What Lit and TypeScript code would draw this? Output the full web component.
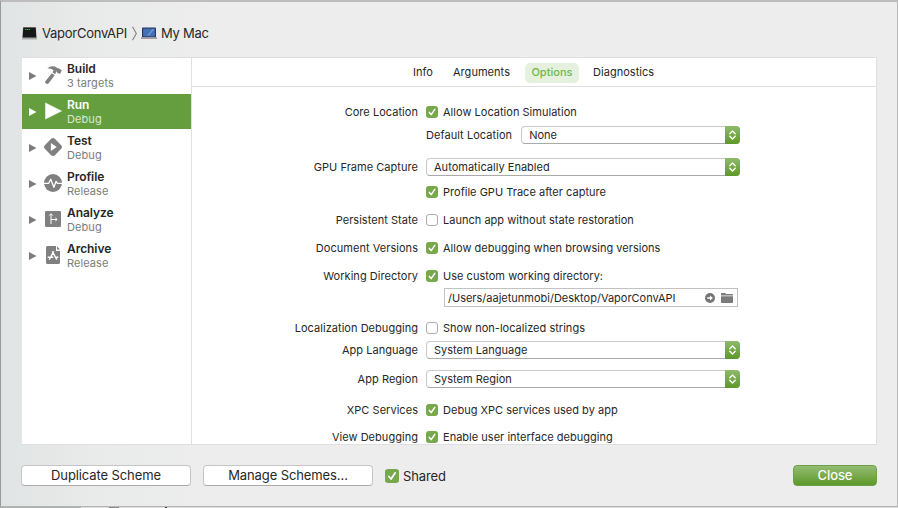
import { LitElement, html, css, svg, nothing } from "lit";
import { customElement } from "lit/decorators.js";
import { classMap } from "lit/directives/class-map.js";

const actions = [
  { name: "Build", sub: "3 targets", icon: "hammer" },
  { name: "Run", sub: "Debug", icon: "play", on: true },
  { name: "Test", sub: "Debug", icon: "test" },
  { name: "Profile", sub: "Release", icon: "profile" },
  { name: "Analyze", sub: "Debug", icon: "analyze" },
  { name: "Archive", sub: "Release", icon: "archive" },
];

const icons: Record<string, unknown> = {
  hammer: svg`<path d="M7.800 7.300 10.700 9.200 4.700 17.200Q3.500 18.600 2 17.600T1.400 15.200z" fill="#808080"/><path d="M3.300 2.200Q7 -.6 11 .6L13.800 2.300 14.800 2.200 17.800 4.200 16 8 12.900 6.600 12.900 5.600 12.300 5.500 11.200 8.200 8.600 6.500 9.600 4.300Q7.500 2.300 3.300 2.200z" fill="#808080"/>`,
  play: svg`<path d="M1.500.9v16.200L17.500 9z" fill="#fff" stroke="#fff" stroke-width=".5" stroke-linejoin="round"/>`,
  test: svg`<rect x="1.900" y="1.900" width="14.200" height="14.200" rx="3" transform="rotate(45 9 9)" fill="#808080"/><path d="M6.900 5.100v7.800L12.700 9z" fill="#fff"/>`,
  profile: svg`<circle cx="9" cy="9" r="9" fill="#808080"/><path d="M0 9.300h4.700l2-4 3.200 8 2.200-6 1.200 2H18" fill="none" stroke="#fff" stroke-width="1.300" stroke-linejoin="round"/>`,
  analyze: svg`<rect x="1" y="1" width="16" height="16" rx="1.200" fill="#808080"/><path d="M7 14V4M5.400 5.500 7 3.700l1.600 1.800M7 9.500h6M11.300 7.900l1.800 1.600-1.800 1.600" fill="none" stroke="#fff" stroke-width="1"/>`,
  archive: svg`<path d="M3.300 0h8.700v5H16V16.500a1.500 1.500 0 0 1-1.500 1.500h-11A1.500 1.500 0 0 1 2 16.500V1.400A1.400 1.400 0 0 1 3.300 0z" fill="#808080"/><path d="M13 .3 16 3.600h-3z" fill="#808080"/><path d="M9.700 5.300 5.300 13.700M8.300 5.300l4.500 8.400M3.700 11.300h5.600M11.700 11.300h2.600" fill="none" stroke="#fff" stroke-width="1.400"/>`,
};

type Row = { gap: number; label?: string; kind: "check" | "select" | "path"; text: string; on?: boolean; lead?: string };
const rows: Row[] = [
  { gap: 0, label: "Core Location", kind: "check", text: "Allow Location Simulation", on: true },
  { gap: 5, kind: "select", text: "None", lead: "Default Location" },
  { gap: 14, label: "GPU Frame Capture", kind: "select", text: "Automatically Enabled" },
  { gap: 7, kind: "check", text: "Profile GPU Trace after capture", on: true },
  { gap: 10, label: "Persistent State", kind: "check", text: "Launch app without state restoration" },
  { gap: 10, label: "Document Versions", kind: "check", text: "Allow debugging when browsing versions", on: true },
  { gap: 10, label: "Working Directory", kind: "check", text: "Use custom working directory:", on: true },
  { gap: 3, kind: "path", text: "/Users/aajetunmobi/Desktop/VaporConvAPI" },
  { gap: 13, label: "Localization Debugging", kind: "check", text: "Show non-localized strings" },
  { gap: 4, label: "App Language", kind: "select", text: "System Language" },
  { gap: 11, label: "App Region", kind: "select", text: "System Region" },
  { gap: 13, label: "XPC Services", kind: "check", text: "Debug XPC services used by app", on: true },
  { gap: 9, label: "View Debugging", kind: "check", text: "Enable user interface debugging", on: true },
];

@customElement("app-root")
export class AppRoot extends LitElement {
  static styles = css`
    :host { display: block; width: 898px; height: 508px; overflow: hidden; background: linear-gradient(90deg, #a7b0ad 0 81px, #dcdcdc 81px 109px, #8c8c8c 109px 119px, #dcdcdc 119px 165px, #444 165px 167px, #dcdcdc 167px); font-family: Inter, sans-serif; color: #272727; }
    * { box-sizing: border-box; }
    svg { display: block; flex: none; }
    .sheet { width: 898px; height: 507px; border: 1px solid #b5b5b5; border-top: 2px solid #bdbdbd; border-left-color: #989b9c; background: linear-gradient(90deg, #e1e4e4 0, #e9eaea 90px, #ededed 220px, #ededed); padding: 21px 20px 0 21px; display: flex; flex-direction: column; }
    .crumb { display: flex; align-items: center; height: 20px; font-size: 13px; letter-spacing: -.27px; }
    .crumb .sep { margin: 0 3px 0 4px; }
    .crumb .t1 { margin-left: 5px; }
    .crumb .t2 { margin-left: 4px; }
    .panel { display: flex; height: 388px; margin-top: 14px; width: 855px; background: #fff; border: 1px solid #dfdfdf; border-left: 0; }
    .side { width: 170px; border-right: 1px solid #dfdfdf; }
    .item { height: 36px; display: flex; align-items: center; padding-left: 7px; border-bottom: 1px solid #fff; }
    .item .arrow { margin: 1px 7px 0 0; }
    .item .pic { width: 18px; height: 18px; margin: -1px 5px 0 0; overflow: visible; }
    .item.on { background: #659e3f; color: #fff; }
    .name { font-size: 12px; font-weight: 600; line-height: 15px; letter-spacing: -.05px; }
    .sub { font-size: 11px; line-height: 14px; letter-spacing: .08px; color: #7c7c7c; }
    .on .sub { color: #d9ead0; }
    .main { flex: 1; display: flex; flex-direction: column; overflow: hidden; }
    .tabs { height: 29px; flex: none; border-bottom: 1px solid #dfdfdf; display: flex; align-items: center; padding-left: 221px; font-size: 11px; letter-spacing: .04px; }
    .tab { margin-right: 20px; }
    .tab.on { background: #e5f1de; color: #6fb848; font-weight: 500; border-radius: 5px; width: 54px; text-align: center; height: 20px; line-height: 19px; margin: 1px 14px 0 -5px; }
    .form { padding-top: 16px; font-size: 11px; letter-spacing: .02px; }
    .row { display: flex; align-items: center; height: 18px; }
    .label { width: 226px; text-align: right; margin-right: 8px; letter-spacing: .04px; }
    .box { width: 12px; height: 12px; border: 1px solid #adadad; border-radius: 3px; background: #fff; margin-right: 5px; }
    .box.on { border: 0; background: #77a84b; }
    .lead { margin-right: 9px; letter-spacing: .06px; }
    .select { flex: 1; height: 18px; border: 1px solid #c9c9c9; border-bottom-color: #aaa; border-radius: 4px; padding-left: 7px; display: flex; align-items: center; justify-content: space-between; }
    .knob { width: 15px; height: 18px; margin: 0 -1px 0 0; border-radius: 0 4px 4px 0; background: linear-gradient(#8fba6b, #5d9829); display: grid; place-items: center; }
    .field { width: 314px; display: flex; align-items: center; }
    .path { width: 294px; height: 19px; margin: 1px 0 0 18px; border: 1px solid #c2c2c2; display: flex; align-items: center; padding: 0 4px 0 3px; }
    .path .txt { flex: 1; letter-spacing: 0; }
    .path .go { margin-right: 6px; }
    .foot { display: flex; align-items: center; height: 22px; margin: 19px 0 0 -1px; font-size: 13px; }
    .btn { width: 170px; height: 21px; border: 1px solid #c6c6c6; border-bottom-color: #ababab; border-radius: 4px; background: #fff; text-align: center; line-height: 19px; margin-right: 12px; letter-spacing: -.1px; }
    .foot .box { width: 14px; height: 14px; margin: 2px 4px 0 0; }
    .shared { margin-top: 2px; letter-spacing: -.1px; }
    .close { margin-left: auto; width: 84px; height: 21px; border-radius: 4px; background: linear-gradient(#93bd72, #5d9829); border: 1px solid #6da044; color: #fff; font-weight: 500; text-align: center; line-height: 19px; letter-spacing: -.1px; }
  `;

  box(on?: boolean) {
    return html`<span class=${classMap({ box: true, on: !!on })}>${on ? html`<svg viewBox="0 0 12 12"><path d="M3.300 6.400 5.200 8.600 8.800 3.300" fill="none" stroke="#fff" stroke-width="1.500" stroke-linecap="round" stroke-linejoin="round"/></svg>` : nothing}</span>`;
  }

  control(r: Row) {
    if (r.kind === "check") return html`${this.box(r.on)}<span>${r.text}</span>`;
    if (r.kind === "path")
      return html`<div class="path"><span class="txt">${r.text}</span>
        <svg class="go" width="10" height="10" viewBox="0 0 10 10"><circle cx="5" cy="5" r="5" fill="#757575"/><path d="M2.200 4.200h2.900V2.400L7.900 5 5.100 7.600V5.800H2.200z" fill="#fff"/></svg>
        <svg width="12" height="10" viewBox="0 0 12 10"><path d="M0 2.500V.8Q0 0 .8 0h3.400l1 1h6q.8 0 .8.800v.7zM0 3.300h12v5.900q0 .8-.8.800H.8Q0 10 0 9.200z" fill="#7b7b7b"/></svg></div>`;
    return html`${r.lead ? html`<span class="lead">${r.lead}</span>` : nothing}
      <div class="select"><span>${r.text}</span><span class="knob"><svg width="7" height="10" viewBox="0 0 7 10"><path d="M.8 3.700 3.500 1l2.700 2.700M.8 6.300 3.500 9l2.700-2.700" fill="none" stroke="#fff" stroke-width="1.300" stroke-linecap="round" stroke-linejoin="round"/></svg></span></div>`;
  }

  render() {
    return html`<div class="sheet">
      <div class="crumb">
        <svg width="15" height="13" viewBox="0 0 15 13"><path d="M1 0h13l1 12.500H0z" fill="#aaa"/><path d="M1.300.5h12.400l.6 10H.7z" fill="#171717"/><path d="M3 2.500h5" stroke="#3fae3d" stroke-dasharray="1.500 .5"/></svg>
        <span class="t1">VaporConvAPI</span>
        <svg class="sep" width="7" height="15" viewBox="0 0 7 15"><path d="M1.500.8 5.300 7.500 1.500 14.200" fill="none" stroke="#828282" stroke-width="1.100"/></svg>
        <svg width="16" height="13" viewBox="0 0 16 13"><rect x="1" y=".5" width="14" height="9.800" rx=".8" fill="#263763"/><rect x="2.200" y="1.600" width="11.600" height="7.800" fill="#4470b8"/><path d="M6 8.500 11.500 2h2L8 8.500z" fill="#6f97d4"/><path d="M0 10.300h16v1.500H0z" fill="#8d8d93"/></svg>
        <span class="t2">My Mac</span>
      </div>
      <div class="panel">
        <div class="side">${actions.map((a) => html`<div class=${classMap({ item: true, on: !!a.on })}>
          <svg class="arrow" width="8" height="8" viewBox="0 0 8 8"><path d="M0 0v8l7.500-4z" fill=${a.on ? "#fff" : "#7d7d7d"}/></svg>
          <svg class="pic" viewBox="0 0 18 18">${icons[a.icon]}</svg>
          <div><div class="name">${a.name}</div><div class="sub">${a.sub}</div></div></div>`)}</div>
        <div class="main">
          <div class="tabs">${["Info", "Arguments", "Options", "Diagnostics"].map((t) => html`<span class=${classMap({ tab: true, on: t === "Options" })}>${t}</span>`)}</div>
          <div class="form">${rows.map((r) => html`<div class="row" style="margin-top:${r.gap}px"><span class="label">${r.label ?? ""}</span><div class="field">${this.control(r)}</div></div>`)}</div>
        </div>
      </div>
      <div class="foot">
        <div class="btn">Duplicate Scheme</div><div class="btn">Manage Schemes...</div>
        ${this.box(true)}<span class="shared">Shared</span>
        <div class="close">Close</div>
      </div>
    </div>`;
  }
}
